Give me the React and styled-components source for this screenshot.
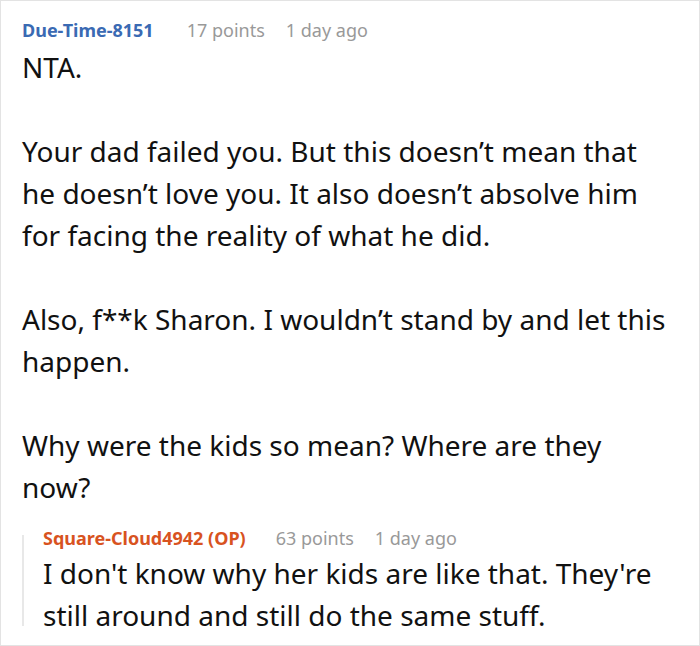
import React from "react";
import styled, { createGlobalStyle } from "styled-components";

const GlobalStyle = createGlobalStyle`
	html, body {
		margin: 0;
		padding: 0;
		background: #ffffff;
	}
	body {
		font-family: "Noto Sans", "Open Sans", Arial, sans-serif;
		color: #111;
	}
`;

const comment = {
	author: "Due-Time-8151",
	points: "17 points",
	time: "1 day ago",
	paragraphs: [
		"NTA.",
		"Your dad failed you. But this doesn\u2019t mean that he doesn\u2019t love you. It also doesn\u2019t absolve him for facing the reality of what he did.",
		"Also, f**k Sharon. I wouldn\u2019t stand by and let this happen.",
		"Why were the kids so mean? Where are they now?",
	],
	reply: {
		author: "Square-Cloud4942 (OP)",
		points: "63 points",
		time: "1 day ago",
		text: "I don't know why her kids are like that. They're still around and still do the same stuff.",
	},
};

const App = () => {
	return (
		<>
			<GlobalStyle />
			<Card>
				<Meta>
					<Author $color="#3a6ab3">{comment.author}</Author>
					<Points>{comment.points}</Points>
					<Time>{comment.time}</Time>
				</Meta>
				<Body>
					{comment.paragraphs.map((text, i) => (
						<Paragraph key={i}>{text}</Paragraph>
					))}
				</Body>
				<Reply>
					<Meta $tight>
						<Author $color="#d8531f" $gap="30px">
							{comment.reply.author}
						</Author>
						<Points>{comment.reply.points}</Points>
						<Time>{comment.reply.time}</Time>
					</Meta>
					<ReplyText>{comment.reply.text}</ReplyText>
				</Reply>
			</Card>
		</>
	);
};

export default App;

/* ========== STYLES ========== */
const Card = styled.div`
	box-sizing: border-box;
	width: 700px;
	height: 646px;
	overflow: hidden;
	border: 1px solid #e3e3e3;
	padding: 17px 27px 0 21px;
	background: #fff;
`;

const Meta = styled.div`
	display: flex;
	align-items: baseline;
	font-size: 18px;
	line-height: 24px;
	margin-bottom: ${(p) => (p.$tight ? "2px" : "4px")};
`;

const Author = styled.span`
	font-weight: 700;
	color: ${(p) => p.$color};
	margin-right: ${(p) => p.$gap || "33px"};
`;

const Points = styled.span`
	color: #999;
	margin-right: 21px;
`;

const Time = styled.span`
	color: #999;
`;

const Body = styled.div`
	font-size: 28px;
	line-height: 42px;
	color: #111;
`;

const Paragraph = styled.p`
	margin: 0 0 42px;
	&:last-child {
		margin-bottom: 0;
	}
`;

const Reply = styled.div`
	position: relative;
	margin-top: 18px;
	padding-left: 21px;

	&::before {
		content: "";
		position: absolute;
		left: 0;
		top: 9px;
		bottom: 10px;
		width: 2px;
		background: #e8e8e8;
	}
`;

const ReplyText = styled.div`
	font-size: 28px;
	line-height: 42px;
	color: #111;
`;
